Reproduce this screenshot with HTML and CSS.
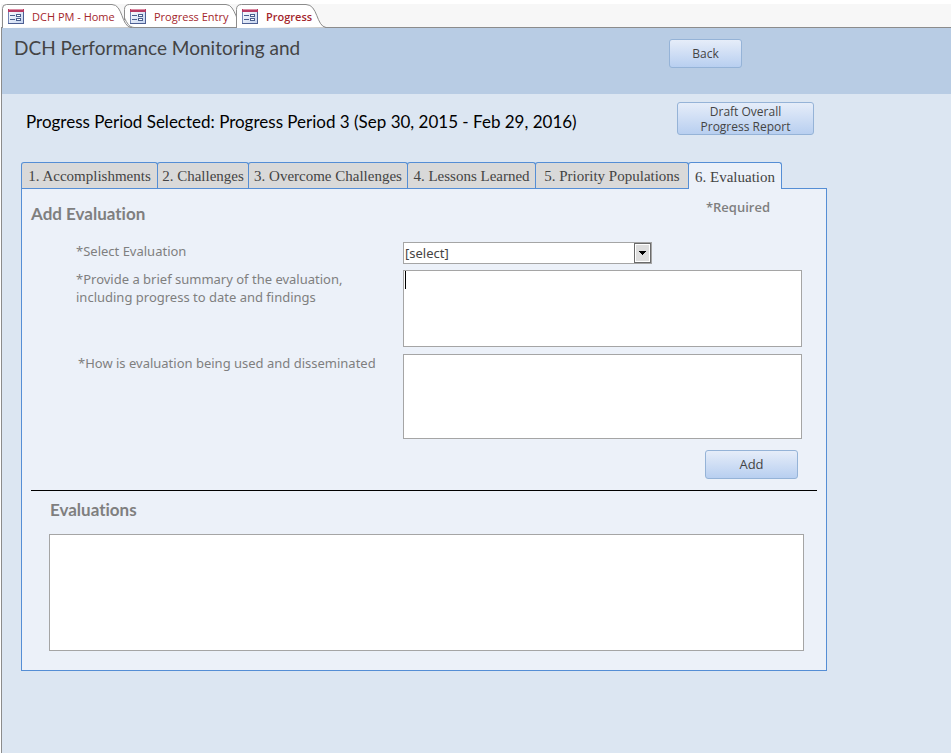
FILE: index.html
```
<!DOCTYPE html>
<html lang="en">
<head>
  <meta charset="UTF-8">
  <title>DCH Performance Monitoring</title>
  <link rel="stylesheet" href="styles.css">
</head>
<body>
  <svg class="defs" width="0" height="0" aria-hidden="true">
    <linearGradient id="icon-fill" x2="1" y2="1">
      <stop stop-color="#fff" />
      <stop offset="1" stop-color="#c3d3f0" />
    </linearGradient>
    <symbol id="form-icon" viewBox="0 0 16 15">
      <rect x="0.5" y="0.5" width="15" height="14" fill="url(#icon-fill)" stroke="#7385b5" />
      <path d="M0 14.500h16M15.500 3v12" stroke="#4d5f93" />
      <rect width="16" height="3" fill="#b83a62" />
      <path d="M1 .5h14" stroke="#dc8fa5" />
      <path d="M2 6.500h5M2 10.500h5" stroke="#4a5f8e" />
      <rect x="8.500" y="5.500" width="4" height="2" fill="#fff" stroke="#4a5f8e" />
      <rect x="8.500" y="9.500" width="4" height="2" fill="#fff" stroke="#4a5f8e" />
    </symbol>
  </svg>
  <div class="window">
    <nav class="doc-tabs">
      <button class="doc-tab doc-home" type="button">
        <svg class="doc-shape" viewBox="0 0 131 24" aria-hidden="true"><path d="M1.500 24V4.500Q1.500.5 5.500.5H111C122 .5 120 22 130 23.500" /></svg>
        <svg class="doc-icon" aria-hidden="true"><use href="#form-icon" /></svg>
        <span>DCH PM - Home</span>
      </button>
      <button class="doc-tab doc-entry" type="button">
        <svg class="doc-shape" viewBox="0 0 122 24" aria-hidden="true"><path d="M.5 16V5.500Q.5.5 5.500.5H102C112 .5 112 22 121 23.500H10C5 23 3 19 .5 14" /></svg>
        <svg class="doc-icon" aria-hidden="true"><use href="#form-icon" /></svg>
        <span>Progress Entry</span>
      </button>
      <button class="doc-tab doc-progress" type="button">
        <svg class="doc-shape" viewBox="0 0 92 24" aria-hidden="true"><path d="M.5 24V5.500Q.5.5 5.500.5H70C82 .5 80 22 90 23.500" /></svg>
        <svg class="doc-icon" aria-hidden="true"><use href="#form-icon" /></svg>
        <span>Progress</span>
      </button>
    </nav>
    <header class="header">
      <h1>DCH Performance Monitoring and</h1>
      <button class="btn btn-back" type="button">Back</button>
    </header>
    <main class="main">
      <div class="period">
        <h2>Progress Period Selected: Progress Period 3 (Sep 30, 2015 - Feb 29, 2016)</h2>
        <button class="btn btn-draft" type="button">Draft Overall Progress Report</button>
      </div>
      <div class="tabs" role="tablist">
        <button class="tab" type="button" role="tab">1. Accomplishments</button>
        <button class="tab" type="button" role="tab">2. Challenges</button>
        <button class="tab" type="button" role="tab">3. Overcome Challenges</button>
        <button class="tab" type="button" role="tab">4. Lessons Learned</button>
        <button class="tab" type="button" role="tab">5. Priority Populations</button>
        <button class="tab active" type="button" role="tab" aria-selected="true">6. Evaluation</button>
      </div>
      <form class="panel">
        <div class="panel-head">
          <h3>Add Evaluation</h3>
          <span class="required">*Required</span>
        </div>
        <div class="fields">
          <label for="evaluation">*Select Evaluation</label>
          <div class="select">
            <select id="evaluation">
              <option>[select]</option>
            </select>
            <svg class="select-arrow" viewBox="0 0 17 20" aria-hidden="true">
              <rect x="0.5" y="0.5" width="16" height="19" fill="#fff" stroke="#6b6b6b" />
              <rect x="2" y="2" width="13" height="16" fill="#dedede" />
              <path d="M5 8h7v1h-1v1h-1v1H9v1H8v-1H7v-1H6V9H5z" />
            </svg>
          </div>
          <label for="summary">*Provide a brief summary of the evaluation, including progress to date and findings</label>
          <textarea id="summary" class="summary"></textarea>
          <label for="usage" class="usage-label">*How is evaluation being used and disseminated</label>
          <textarea id="usage" class="usage"></textarea>
        </div>
        <div class="actions">
          <button class="btn btn-add" type="button">Add</button>
        </div>
        <hr>
        <h3 class="list-title" id="list-title">Evaluations</h3>
        <div class="list" role="region" aria-labelledby="list-title"></div>
      </form>
    </main>
  </div>
</body>
</html>
```
FILE: styles.css
```
* {
  box-sizing: border-box;
}
body {
  margin: 0;
  font-family: "Open Sans", "Noto Sans", sans-serif;
  color: #444;
  background: #dce6f2;
}
h1, h2, h3 {
  margin: 0;
}
button, select, textarea {
  margin: 0;
  font-family: inherit;
  color: inherit;
}
.defs {
  position: absolute;
}
.window {
  display: flex;
  flex-direction: column;
  min-height: 100vh;
  padding-left: 1px;
  background: #fff;
}
.doc-tabs {
  display: flex;
  height: 27px;
  padding-top: 4px;
  background: linear-gradient(#fff 4px, #f7f7f7 4px);
}
.doc-tab {
  position: relative;
  display: flex;
  align-items: center;
  gap: 8px;
  height: 24px;
  padding: 0 0 0 7px;
  border: 0;
  background: none;
  font-size: 11px;
  color: #a4262c;
  white-space: nowrap;
}
.doc-tab span, .doc-icon {
  position: relative;
}
.doc-home {
  width: 131px;
}
.doc-entry {
  width: 122px;
  margin-left: -8px;
  padding-left: 6px;
}
.doc-progress {
  width: 92px;
  margin-left: -10px;
  padding-left: 6px;
  font-weight: 600;
}
.doc-shape {
  position: absolute;
  top: 0;
  left: 0;
  width: 100%;
  height: 24px;
  fill: #fff;
  stroke: #8c8c8c;
}
.doc-icon {
  flex: none;
  width: 16px;
  height: 15px;
}
.header {
  display: flex;
  align-items: flex-start;
  height: 67px;
  padding: 8px 209px 0 12px;
  border-top: 1px solid #8c8c8c;
  border-left: 1px solid #8c8c8c;
  background: #b8cce4;
}
.header h1 {
  flex: 1;
  font-family: Lato, "Open Sans", sans-serif;
  font-size: 19px;
  font-weight: normal;
  line-height: 24px;
}
.btn {
  padding: 0;
  border: 1px solid #95b3d7;
  border-radius: 3px;
  background: linear-gradient(#e6edf9, #b8cff0);
  font-size: 12px;
  line-height: 15px;
}
.btn-back {
  width: 73px;
  height: 29px;
  margin-top: 3px;
}
.main {
  flex: 1;
  padding: 8px 124px 80px 19px;
  border-left: 1px solid #8c8c8c;
  background: #dce6f2;
}
.period {
  display: flex;
  align-items: flex-start;
  justify-content: space-between;
  height: 60px;
  padding: 0 13px 0 5px;
}
.period h2 {
  font-family: Lato, "Open Sans", sans-serif;
  font-size: 17px;
  font-weight: normal;
  line-height: 39px;
  color: #000;
  white-space: nowrap;
}
.btn-draft {
  width: 137px;
  height: 33px;
  padding: 0 20px;
}
.tabs {
  display: grid;
  grid-template-columns: 136px 91px 159px 128px 153px 93px;
}
.tab {
  height: 26px;
  margin-right: -1px;
  padding: 2px 0 0;
  border: 1px solid #558ed5;
  border-bottom: 0;
  border-radius: 3px 3px 0 0;
  background: #d9d9d9;
  font-family: "Liberation Serif", serif;
  font-size: 15px;
  white-space: nowrap;
}
.tab.active {
  position: relative;
  height: 27px;
  margin-bottom: -1px;
  background: #ecf1f9;
}
.panel {
  padding: 12px 9px 19px;
  border: 1px solid #558ed5;
  background: #ecf1f9;
  color: #7f7f7f;
}
.panel-head {
  display: flex;
  justify-content: space-between;
  height: 41px;
  padding-right: 47px;
}
.panel h3 {
  font-family: Lato, "Open Sans", sans-serif;
  font-size: 17px;
  font-variant-ligatures: none;
  line-height: 26px;
}
.required {
  font-size: 13px;
  font-weight: 600;
  line-height: 12px;
}
.fields {
  display: grid;
  grid-template-columns: 327px 1fr;
  row-gap: 7px;
  padding: 0 15px 0 45px;
  font-family: "Noto Sans", "Open Sans", sans-serif;
  font-size: 13px;
  line-height: 18px;
}
.fields label {
  padding-right: 50px;
}
.fields .usage-label {
  padding: 0 0 0 2px;
}
.select {
  position: relative;
  width: 249px;
  height: 21px;
}
.fields select {
  appearance: none;
  display: block;
  width: 100%;
  height: 22px;
  padding: 0 20px 1px 1px;
}
.select-arrow {
  position: absolute;
  top: 1px;
  right: 1px;
  width: 17px;
  height: 20px;
  pointer-events: none;
}
.fields select, .fields textarea {
  border: 1px solid #a5a5a5;
  border-radius: 0;
  background: #fff;
  font-size: 13px;
  color: #444;
  outline: none;
}
.fields textarea {
  display: block;
  width: 100%;
  padding: 1px;
  resize: none;
}
.fields .summary {
  height: 77px;
  background: #fff linear-gradient(#000, #000) 1px 0 / 1px 18px no-repeat;
}
.usage {
  height: 85px;
}
.actions {
  display: flex;
  justify-content: flex-end;
  padding: 11px 19px;
}
.btn-add {
  width: 93px;
  height: 29px;
  font-size: 13px;
  color: #444;
}
.panel hr {
  margin: 0;
  border: 0;
  border-top: 1px solid #000;
}
.panel .list-title {
  padding: 6px 19px 11px;
}
.list {
  height: 117px;
  margin: 0 13px 0 18px;
  border: 1px solid #a5a5a5;
  background: #fff;
}
```
